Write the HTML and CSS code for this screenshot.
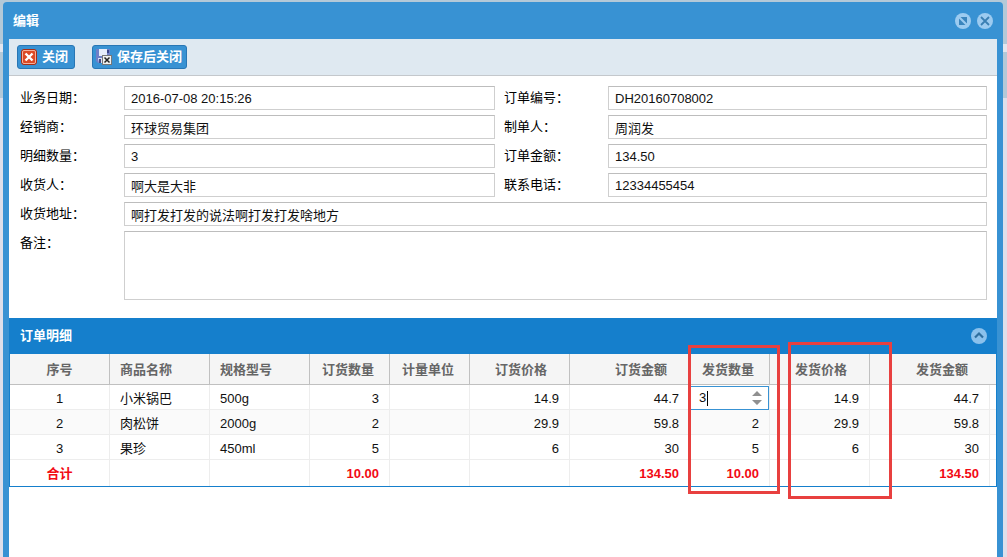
FILE: index.html
```html
<!DOCTYPE html>
<html lang="zh-CN">
<head>
<meta charset="utf-8">
<title>编辑</title>
<link rel="stylesheet" href="styles.css">
</head>
<body>
<main class="window">
  <header class="window-header">
    <h1 class="title">编辑</h1>
    <div class="tools">
      <button class="tool" type="button" aria-label="还原">
        <svg viewBox="0 0 16 16" width="16" height="16"><circle cx="8" cy="8" r="8" fill="#9ccbf0"/><path d="M4 4h8v8H4z" fill="#3a85bd"/><path d="M3.500 3.500l9 9" stroke="#9ccbf0" stroke-width="2.200"/></svg>
      </button>
      <button class="tool" type="button" aria-label="关闭窗口">
        <svg viewBox="0 0 16 16" width="16" height="16"><circle cx="8" cy="8" r="8" fill="#9ccbf0"/><path d="M4 4l8 8M12 4l-8 8" stroke="#3a7fb3" stroke-width="1.800"/></svg>
      </button>
    </div>
  </header>
  <div class="window-body">
    <div class="toolbar">
      <button class="btn" type="button">
        <svg viewBox="0 0 16 16" width="16" height="16"><rect x=".5" y=".5" width="15" height="15" rx="2.500" fill="#dc4a26" stroke="#a82c14"/><rect x="1.500" y="1.500" width="13" height="13" rx="1.500" fill="none" stroke="#f5b09a"/><path d="M4.500 4.500l7 7M11.500 4.500l-7 7" stroke="#fff" stroke-width="2.400"/></svg>
        <span>关闭</span>
      </button>
      <button class="btn" type="button">
        <svg viewBox="0 0 16 16" width="16" height="16"><path d="M0 0h14v14H2l-2-2z" fill="#6f7fc8"/><path d="M3 0h8v7H3z" fill="#e6ecfa"/><path d="M11 1h2v3h-2z" fill="#3b4488"/><path d="M2 9h6v5H3z" fill="#dfe2f3"/><path d="M3 10h2v4H3z" fill="#444c86"/><rect x="6.500" y="6.500" width="9" height="9" fill="#efefef" stroke="#777"/><path d="M8.500 8.500l5 5M13.500 8.500l-5 5" stroke="#222" stroke-width="1.500"/></svg>
        <span>保存后关闭</span>
      </button>
    </div>
    <form class="form">
      <label for="date">业务日期：</label><input id="date" value="2016-07-08 20:15:26">
      <label class="second" for="number">订单编号：</label><input id="number" value="DH20160708002">
      <label for="dealer">经销商：</label><input id="dealer" value="环球贸易集团">
      <label class="second" for="maker">制单人：</label><input id="maker" value="周润发">
      <label for="count">明细数量：</label><input id="count" value="3">
      <label class="second" for="amount">订单金额：</label><input id="amount" value="134.50">
      <label for="receiver">收货人：</label><input id="receiver" value="啊大是大非">
      <label class="second" for="phone">联系电话：</label><input id="phone" value="12334455454">
      <label for="address">收货地址：</label><input class="wide" id="address" value="啊打发打发的说法啊打发打发啥地方">
      <label for="remark">备注：</label><textarea class="wide" id="remark"></textarea>
    </form>
    <section class="panel">
      <header class="panel-header">
        <h2 class="title">订单明细</h2>
        <button class="tool" type="button" aria-label="折叠">
          <svg viewBox="0 0 16 16" width="16" height="16"><circle cx="8" cy="8" r="8" fill="#8bc1ec"/><path d="M4 9.500L8 5.500l4 4" fill="none" stroke="#2f6f9f" stroke-width="2.200"/></svg>
        </button>
      </header>
      <table class="grid">
        <colgroup><col class="w100"><col class="w100"><col class="w100"><col class="w80"><col class="w80"><col class="w100"><col class="w120"><col class="w80"><col class="w100"><col class="w120"><col></colgroup>
        <thead>
          <tr><th class="center">序号</th><th class="left">商品名称</th><th class="left">规格型号</th><th class="narrow">订货数量</th><th class="narrow">计量单位</th><th>订货价格</th><th>订货金额</th><th class="narrow">发货数量</th><th>发货价格</th><th class="last">发货金额</th><th class="rest"></th></tr>
        </thead>
        <tbody>
          <tr><td class="center">1</td><td class="left">小米锅巴</td><td class="left">500g</td><td>3</td><td></td><td>14.9</td><td>44.7</td>
            <td class="editing"><div class="spinner"><input class="spinner-input" aria-label="发货数量" value="3"><span class="caret"></span>
              <svg viewBox="0 0 10 14" width="10" height="14"><path d="M0 5l5-5 5 5zM0 9l5 5 5-5z" fill="#909090"/></svg></div></td>
            <td>14.9</td><td>44.7</td><td class="rest"></td></tr>
          <tr class="alt"><td class="center">2</td><td class="left">肉松饼</td><td class="left">2000g</td><td>2</td><td></td><td>29.9</td><td>59.8</td><td>2</td><td>29.9</td><td>59.8</td><td class="rest"></td></tr>
          <tr><td class="center">3</td><td class="left">果珍</td><td class="left">450ml</td><td>5</td><td></td><td>6</td><td>30</td><td>5</td><td>6</td><td>30</td><td class="rest"></td></tr>
        </tbody>
        <tfoot>
          <tr><td class="center">合计</td><td></td><td></td><td>10.00</td><td></td><td></td><td>134.50</td><td>10.00</td><td></td><td>134.50</td><td class="rest"></td></tr>
        </tfoot>
      </table>
      <div class="mark mark-quantity"></div>
      <div class="mark mark-price"></div>
    </section>
  </div>
</main>
</body>
</html>
```
FILE: styles.css
```css
* { box-sizing: border-box; }

body {
  margin: 0;
  padding: 2px 4px 0 3px;
  min-height: 100vh;
  display: flex;
  background: linear-gradient(#b4c9d8 0 44px, #e4e6ee 44px 52px, #b4c9d8 52px 98px, #dedfea 98px);
  color: #111;
  font: 13px/16px "Liberation Sans", "Noto Sans CJK SC", sans-serif;
  overflow: hidden;
}

button, input, textarea { font: inherit; color: inherit; }

.window {
  flex: 1;
  display: flex;
  flex-direction: column;
  padding: 0 6px;
  border-radius: 4px 4px 0 0;
  background: #3892d3;
}

.window-header, .panel-header {
  display: flex;
  align-items: center;
  justify-content: space-between;
  color: #fff;
}

.window-header { height: 37px; padding: 0 4px; }

.title { margin: 0; font-size: 13px; line-height: 16px; font-weight: 700; }

.tools { display: flex; gap: 6px; }

.tool {
  display: block;
  width: 16px;
  height: 16px;
  padding: 0;
  border: 0;
  background: none;
}

.tool svg { display: block; }

.window-body { flex: 1; background: #fff; }

.toolbar {
  display: flex;
  gap: 17px;
  padding: 6px 8px;
  background: #dfe9f1;
  border-bottom: 1px solid #c4c8cc;
}

.btn {
  display: flex;
  align-items: center;
  gap: 5px;
  height: 24px;
  padding: 0 6px 0 3px;
  border: 1px solid #2876b4;
  border-radius: 3px;
  background: #3892d3;
  color: #fff;
  font-weight: 700;
}

.btn + .btn { padding-right: 4px; }

.form {
  display: grid;
  grid-template-columns: 104px 371fr 113px 379fr;
  gap: 5px 0;
  padding: 10px 10px 18px 11px;
}

.form label { padding-top: 4px; color: #000; }
.form .second { padding-left: 9px; }

.form input, .form textarea {
  width: 100%;
  min-width: 0;
  height: 24px;
  margin: 0;
  padding: 0 6px;
  border: 1px solid #cfcfcf;
  border-top-color: #bdbdbd;
  border-radius: 0;
  background: #fff;
  outline: 0;
}

.form .wide { grid-column: 2 / -1; }
.form textarea { display: block; height: 69px; resize: none; }

.panel { position: relative; }

.panel-header { height: 36px; padding: 0 10px 0 11px; background: #157fcc; }

.grid {
  width: 100%;
  table-layout: fixed;
  border-collapse: separate;
  border-spacing: 0;
  border: 1px solid #157fcc;
  border-width: 0 1px 1px;
}

.w80 { width: 80px; }
.w100 { width: 100px; }
.w120 { width: 120px; }

.grid th {
  height: 31px;
  padding: 2px 22px 0 0;
  border: solid #c0c0c0;
  border-width: 0 1px 1px 0;
  background: #f5f5f5;
  color: #666;
  text-align: right;
  font-weight: 700;
}

.grid td {
  height: 25px;
  padding: 4px 10px 0 0;
  border: solid #ededed;
  border-width: 0 1px 1px 0;
  text-align: right;
}

.grid .center { padding-left: 0; padding-right: 0; text-align: center; }
.grid .left { padding-left: 10px; padding-right: 0; text-align: left; }
.grid .narrow { padding-right: 15px; }
.grid .last, .grid .rest { border-right: 0; }
.grid .rest { padding: 0; }
.grid .alt td { background: #fafafa; }
.grid .editing { padding: 0; border-bottom: 0; }

.grid tfoot td { height: 26px; padding-top: 2px; border-bottom: 0; color: #f20a14; font-weight: 700; }

.spinner {
  display: flex;
  align-items: center;
  height: 24px;
  margin-top: 1px;
  padding: 0 6px 0 8px;
  border: 1px solid #3892d3;
  background: #fff;
}

.spinner-input {
  width: 8px;
  padding: 0;
  border: 0;
  background: none;
  outline: 0;
}

.caret { width: 1px; height: 15px; margin-right: auto; background: #000; }

/* Highlight frames drawn over the delivery columns */
.mark { position: absolute; border: 3px solid #e8403f; }
.mark-quantity { left: 679px; top: 27px; width: 92px; height: 149px; }
.mark-price { left: 779px; top: 24px; width: 104px; height: 157px; }
```
